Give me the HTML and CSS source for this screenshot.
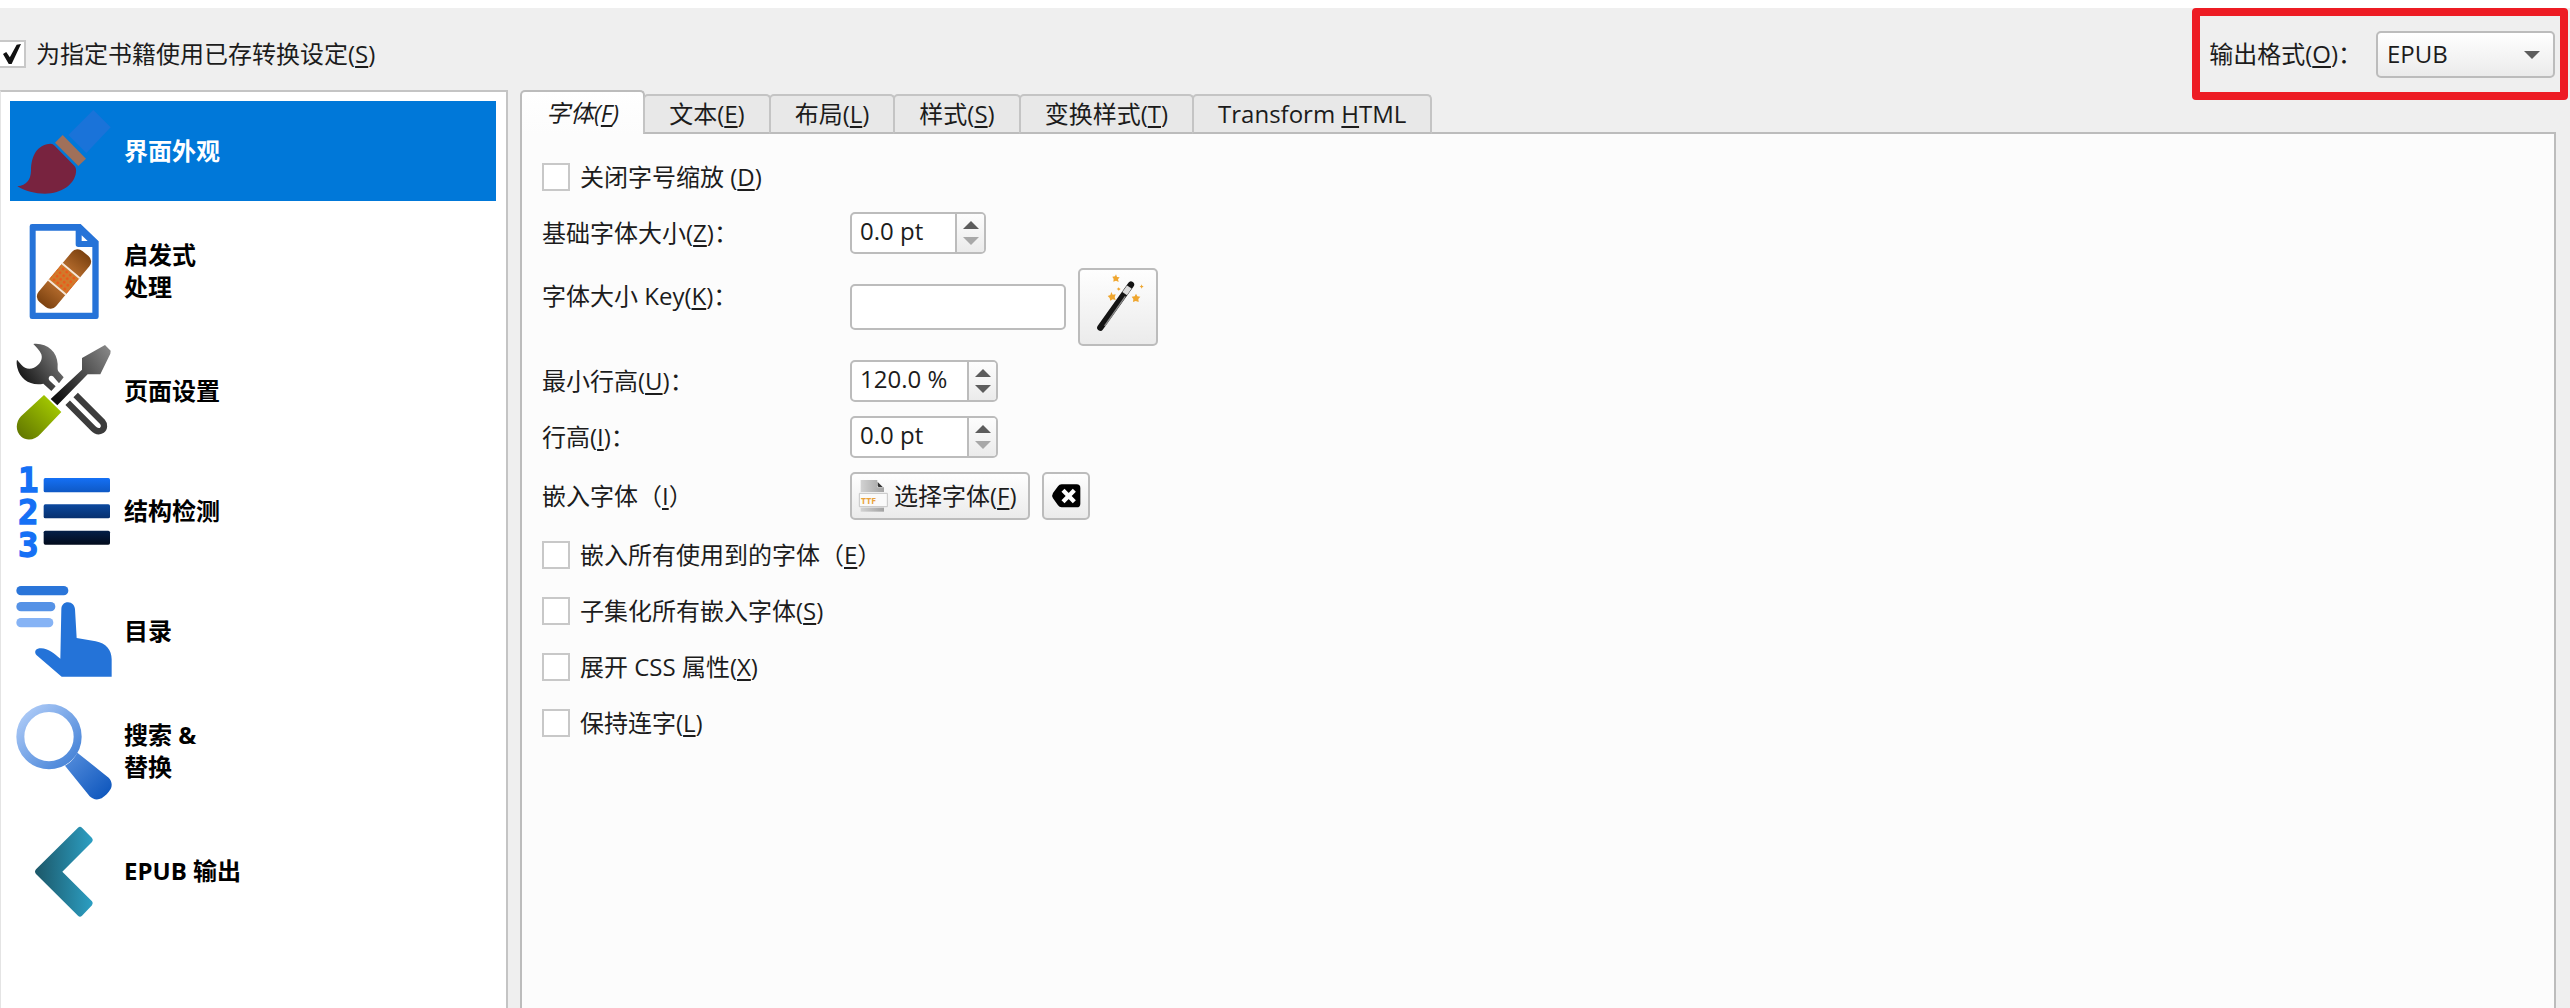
FILE: index.html
```html
<!DOCTYPE html>
<html lang="zh-CN">
<head>
  <meta charset="UTF-8">
  <meta name="viewport" content="width=device-width, initial-scale=1.0">
  <title>转换</title>
  <link rel="stylesheet" href="styles.css">
</head>
<body>
  <header class="topbar">
    <label class="check"><input type="checkbox" checked><span>为指定书籍使用已存转换设定(<u>S</u>)</span></label>
    <div class="output-format">
      <label for="format">输出格式(<u>O</u>)：</label>
      <div class="select-wrap">
        <select id="format">
          <option>EPUB</option>
        </select>
      </div>
    </div>
  </header>

  <main class="content">
    <nav class="sidebar">
      <button type="button" class="item active">
        <svg class="icon" viewBox="48 309 288 288">
          <path fill="#1a73d9" d="M280 330l52 52-73 77-54-54z"/>
          <path fill="#a0705a" d="M188 405l70 71-23 22-70-70z"/>
          <path fill="#78233f" d="M152 431c5 0 8 2 12 6l59 60c5 6 6 11 5 20-4 36-43 64-93 64-30 0-59-7-83-22 28-3 40-20 41-46 0-46 18-79 59-82z"/>
        </svg>
        <span>界面外观</span>
      </button>
      <button type="button" class="item">
        <svg class="icon" viewBox="48 669 288 288">
          <defs>
            <linearGradient id="band" x1="0" y1="0" x2="1" y2="0">
              <stop offset="0" stop-color="#7c4210"/>
              <stop offset=".3" stop-color="#ac6528"/>
              <stop offset=".7" stop-color="#ac6528"/>
              <stop offset="1" stop-color="#7c4210"/>
            </linearGradient>
            <pattern id="dots" width="14" height="14" patternUnits="userSpaceOnUse">
              <rect width="14" height="14" fill="#cf7b2c"/>
              <circle cx="7" cy="7" r="4" fill="#ee5518"/>
            </pattern>
          </defs>
          <path fill="#2673d8" fill-rule="evenodd" d="M96 672h146l54 52v226q0 7-7 7H96q-7 0-7-7V679q0-7 7-7zm11 20v246h170V741h-42q-8 0-8-8v-41zm138 14v17h18z"/>
          <g transform="translate(192 837) rotate(-50)">
            <rect x="-100" y="-34" width="200" height="68" rx="22" fill="url(#band)"/>
            <rect x="-30" y="-34" width="60" height="68" fill="url(#dots)"/>
            <path d="M-32-35v70M32-35v70" stroke="#f6e6d8" stroke-width="6"/>
          </g>
        </svg>
        <span>启发式<br>处理</span>
      </button>
      <button type="button" class="item">
        <svg class="icon" viewBox="48 39 288 288">
          <defs>
            <linearGradient id="steel" x1="0" y1=".7" x2="1" y2="0">
              <stop offset="0" stop-color="#111"/>
              <stop offset="1" stop-color="#8c8c8c"/>
            </linearGradient>
            <linearGradient id="grip" x1="0" y1="1" x2="1" y2="0">
              <stop offset="0" stop-color="#5c7000"/>
              <stop offset="1" stop-color="#b0d800"/>
            </linearGradient>
          </defs>
          <path fill="url(#steel)" d="M100 42c40-4 71 22 73 60 0 9-1 18 2 22l16 18-14 18-18-21q-7-4-12 2-3 6 2 11l18 17-13 14-24-22c-38 8-70-14-78-48-2-9-3-17-1-24l13 15c10 12 24 15 38 9 18-8 27-25 22-40-5-13-14-20-24-31z"/>
          <path fill="none" stroke="#3c3c3c" stroke-width="19" d="M203 218l76 77c8 8 18 11 26 6 9-6 9-18 2-26l-80-80"/>
          <path fill="url(#steel)" d="M315 45l17 17-1 9-30 62h-38l-91 93-20-19 94-88V84z"/>
          <path fill="url(#grip)" d="M132 195l52 51-62 65c-16 19-42 23-58 9-19-16-17-44-1-61z"/>
        </svg>
        <span>页面设置</span>
      </button>
      <button type="button" class="item">
        <svg class="icon" viewBox="48 399 288 288">
          <defs>
            <linearGradient id="bar1" x1="0" y1="0" x2="0" y2="1"><stop stop-color="#1570f5"/><stop offset="1" stop-color="#0e58c4"/></linearGradient>
            <linearGradient id="bar2" x1="0" y1="0" x2="0" y2="1"><stop stop-color="#0b489e"/><stop offset="1" stop-color="#07306e"/></linearGradient>
            <linearGradient id="bar3" x1="0" y1="0" x2="0" y2="1"><stop stop-color="#041f48"/><stop offset="1" stop-color="#020b1c"/></linearGradient>
          </defs>
          <g class="digits">
            <text x="85" y="485">1</text>
            <text x="85" y="583">2</text>
            <text x="85" y="681">3</text>
          </g>
          <rect x="131" y="444" width="199" height="43" rx="5" fill="url(#bar1)"/>
          <rect x="131" y="523" width="199" height="42" rx="5" fill="url(#bar2)"/>
          <rect x="131" y="602" width="199" height="42" rx="5" fill="url(#bar3)"/>
        </svg>
        <span>结构检测</span>
      </button>
      <button type="button" class="item">
        <svg class="icon" viewBox="48 759 288 288">
          <rect x="49" y="768" width="156" height="28" rx="14" fill="#2a75d9"/>
          <rect x="49" y="816" width="117" height="28" rx="14" fill="#5592e6"/>
          <rect x="49" y="864" width="111" height="28" rx="14" fill="#86b3f5"/>
          <path fill="#2473d8" d="M184 838c0-13 8-21 20-21s20 9 21 21l5 86 57 10c31 6 48 26 48 54v52H185l-75-64c-8-8-5-19 8-21 24-3 42 14 63 31z"/>
        </svg>
        <span>目录</span>
      </button>
      <button type="button" class="item">
        <svg class="icon" viewBox="48 129 288 288">
          <defs>
            <linearGradient id="glass" gradientUnits="userSpaceOnUse" x1="70" y1="150" x2="320" y2="410">
              <stop offset="0" stop-color="#aecbf7"/>
              <stop offset=".5" stop-color="#578fdd"/>
              <stop offset="1" stop-color="#0f57bd"/>
            </linearGradient>
          </defs>
          <circle cx="147" cy="230" r="86" fill="none" stroke="url(#glass)" stroke-width="24"/>
          <path fill="url(#glass)" d="M232 278l94 75c9 9 12 23 6 34-7 12-16 20-27 28-13 6-26 4-36-6l-74-92c16-8 28-23 37-39z"/>
        </svg>
        <span>搜索 &amp;<br>替换</span>
      </button>
      <button type="button" class="item">
        <svg class="icon" viewBox="48 489 288 288">
          <defs>
            <linearGradient id="chev" x1="0" y1="0" x2="1" y2="0"><stop stop-color="#1c5768"/><stop offset="1" stop-color="#2c9fc3"/></linearGradient>
          </defs>
          <path fill="url(#chev)" d="M234 503q6-6 12 0l30 31q5 6 0 12l-89 89 89 89q5 6 0 12l-30 31q-6 6-12 0L108 642q-6-7 0-14z"/>
        </svg>
        <span>EPUB 输出</span>
      </button>
    </nav>

    <section class="settings">
      <div class="tabs" role="tablist">
        <button type="button" role="tab" class="tab selected">字体(<u>F</u>)</button>
        <button type="button" role="tab" class="tab">文本(<u>E</u>)</button>
        <button type="button" role="tab" class="tab">布局(<u>L</u>)</button>
        <button type="button" role="tab" class="tab">样式(<u>S</u>)</button>
        <button type="button" role="tab" class="tab">变换样式(<u>T</u>)</button>
        <button type="button" role="tab" class="tab">Transform <u>H</u>TML</button>
      </div>

      <form class="panel">
        <label class="check wide"><input type="checkbox"><span>关闭字号缩放 (<u>D</u>)</span></label>

        <label for="base-size">基础字体大小(<u>Z</u>)：</label>
        <div class="spin spin-small">
          <input type="text" id="base-size" value="0.0 pt">
          <div class="steps">
            <button type="button" class="step up" aria-label="+"></button>
            <button type="button" class="step down off" aria-label="-"></button>
          </div>
        </div>

        <label for="size-key" class="key-label">字体大小 Key(<u>K</u>)：</label>
        <div class="field">
          <input type="text" id="size-key" class="text-input">
          <button type="button" class="btn wand" aria-label="Key">
            <svg viewBox="759 95 210 210" width="70" height="70">
              <path d="M811 262L903 133" stroke="#141414" stroke-width="19" stroke-linecap="round"/>
              <path d="M824 257l62-89" stroke="#8a8a8a" stroke-width="4"/>
              <path d="M884 160l14-20" stroke="#dcdcdc" stroke-width="17"/>
              <g fill="#efa62f">
                <path d="M858 102l3 8 8 1-5 6 2 8-8-4-8 3 1-8-4-7 8-1z"/>
                <path d="M844 155l4 8 9-1-3 9 3 8-9-2-7 4-2-8-6-6 8-3z"/>
                <path d="M918 160l4 8 9 1-6 7 1 9-9-3-8 3 1-9-5-7 9-1z"/>
                <path d="M934 132l2 4 5 2-4 3-2 4-2-4-4-2 4-3z"/>
                <path d="M866 141l2 3 4 2-3 2-3 3-2-3-4-2 4-2z"/>
              </g>
            </svg>
          </button>
        </div>

        <label for="min-height">最小行高(<u>U</u>)：</label>
        <div class="spin">
          <input type="text" id="min-height" value="120.0 %">
          <div class="steps">
            <button type="button" class="step up" aria-label="+"></button>
            <button type="button" class="step down" aria-label="-"></button>
          </div>
        </div>

        <label for="line-height">行高(<u>I</u>)：</label>
        <div class="spin">
          <input type="text" id="line-height" value="0.0 pt">
          <div class="steps">
            <button type="button" class="step up" aria-label="+"></button>
            <button type="button" class="step down off" aria-label="-"></button>
          </div>
        </div>

        <label for="embed-font">嵌入字体（<u>I</u>）</label>
        <div class="field">
          <button type="button" class="btn choose" id="embed-font">
            <svg viewBox="84 726 96 96" width="32" height="32">
              <defs>
                <linearGradient id="page" x1="0" y1="0" x2="1" y2="0"><stop stop-color="#d2d2d2"/><stop offset="1" stop-color="#a2a2a2"/></linearGradient>
              </defs>
              <path fill="url(#page)" d="M92 726h50v22h20v14H92z"/>
              <path fill="#333" d="M143 732l15 15h-11q-4 0-4-4z"/>
              <path fill="#fafafa" stroke="#c4c4c4" stroke-width="3" d="M88 766h84v40H88z"/>
              <path fill="url(#page)" d="M92 809h70v12H92z"/>
              <text class="ttf" x="93" y="797">TTF</text>
            </svg>
            <span>选择字体(<u>F</u>)</span>
          </button>
          <button type="button" class="btn clear" aria-label="清除">
            <svg viewBox="660 720 96 96" width="32" height="32">
              <path d="M695 733h45q11 0 11 11v47q0 11-11 11h-45q-7 0-11-6l-15-21q-5-8 0-16l15-20q4-6 11-6z"/>
              <path d="M699 751l34 34m0-34l-34 34" stroke="#fff" stroke-width="13"/>
            </svg>
          </button>
        </div>

        <label class="check wide"><input type="checkbox"><span>嵌入所有使用到的字体（<u>E</u>）</span></label>
        <label class="check wide"><input type="checkbox"><span>子集化所有嵌入字体(<u>S</u>)</span></label>
        <label class="check wide"><input type="checkbox"><span>展开 CSS 属性(<u>X</u>)</span></label>
        <label class="check wide"><input type="checkbox"><span>保持连字(<u>L</u>)</span></label>
      </form>
    </section>
  </main>
</body>
</html>
```

FILE: styles.css
```css
* {
  box-sizing: border-box;
}

body {
  margin: 0;
  height: 100vh;
  display: flex;
  flex-direction: column;
  overflow: hidden;
  background: #efefef;
  border-top: 8px solid #fff;
  color: #1c1c1c;
  font-family: "Open Sans", "Noto Sans CJK SC", sans-serif;
  font-size: 24px;
  line-height: 32px;
}

button,
input,
select {
  font: inherit;
  color: inherit;
  margin: 0;
}

u {
  text-decoration-thickness: 2px;
  text-underline-offset: 3px;
}

.topbar {
  display: flex;
  justify-content: space-between;
  align-items: center;
  height: 82px;
  padding-top: 10px;
  padding-right: 15px;
  flex-shrink: 0;
}

.topbar .check {
  margin-left: -2px;
}

/* check boxes */
.check {
  display: flex;
  align-items: center;
  gap: 10px;
}

.check input {
  appearance: none;
  width: 28px;
  height: 28px;
  background: #fff;
  border: 2px solid #c8c8c8;
  flex-shrink: 0;
}

.check input:checked::before {
  content: "";
  display: block;
  width: 18px;
  height: 20px;
  margin: 2px 3px;
  background: #111;
  clip-path: polygon(0 50%, 18% 40%, 38% 66%, 76% 4%, 100% 0, 48% 100%, 32% 100%);
}

/* output format */
.output-format {
  display: flex;
  align-items: center;
  gap: 14px;
  position: relative;
}

.output-format::after {
  content: "";
  position: absolute;
  top: -23px;
  right: -13px;
  bottom: -22px;
  left: -17px;
  border: 8px solid #ed1c24;
  border-radius: 4px;
  pointer-events: none;
}

.select-wrap {
  position: relative;
}

.select-wrap::after {
  content: "";
  position: absolute;
  top: 20px;
  right: 15px;
  border: 8px solid transparent;
  border-top-color: #5c5c5c;
  border-bottom: 0;
  pointer-events: none;
}

select {
  appearance: none;
  display: block;
  width: 179px;
  height: 47px;
  padding: 0 9px;
  background: linear-gradient(#fff, #ebebeb);
  border: 2px solid #bcbcbc;
  border-radius: 5px;
}

.content {
  flex: 1;
  min-height: 0;
  display: flex;
  gap: 12px;
  padding-right: 14px;
}

/* sidebar */
.sidebar {
  width: 508px;
  flex-shrink: 0;
  display: flex;
  flex-direction: column;
  gap: 20px;
  padding: 9px 10px 0 9px;
  background: #fff;
  border: 2px solid #c4c4c4;
  border-left: 1px solid #e4e4e4;
  border-bottom: 0;
}

.item {
  display: flex;
  align-items: center;
  gap: 12px;
  height: 100px;
  padding: 0 6px;
  flex-shrink: 0;
  border: 0;
  background: none;
  color: #000;
  font-weight: bold;
  text-align: left;
}

.item.active {
  background: #0078d9;
  color: #fff;
}

.icon {
  width: 96px;
  height: 96px;
  flex-shrink: 0;
  overflow: visible;
}

.digits {
  font-family: "DejaVu Sans Mono", monospace;
  font-size: 102px;
  font-weight: bold;
  fill: #1570f5;
  stroke: #1570f5;
  stroke-width: 4px;
  text-anchor: middle;
}

/* tabs */
.settings {
  flex: 1;
  display: flex;
  flex-direction: column;
}

.tabs {
  display: flex;
  align-items: flex-end;
  height: 44px;
  margin-bottom: -2px;
  z-index: 1;
}

.tab {
  height: 40px;
  padding: 0 24px;
  margin-left: -2px;
  background: #e8e8e8;
  border: 2px solid #c4c4c4;
  border-bottom-color: #bcbcbc;
  border-radius: 5px 5px 0 0;
}

.tab.selected {
  height: 44px;
  margin-left: 0;
  background: linear-gradient(#fff, #fcfcfc);
  border-color: #bcbcbc;
  border-bottom: 0;
  font-style: italic;
}

.panel {
  flex: 1;
  display: grid;
  grid-template-columns: 308px 1fr;
  align-content: start;
  align-items: center;
  gap: 14px 0;
  padding: 22px 20px 0;
  background: #fcfcfc;
  border: 2px solid #bcbcbc;
  border-bottom: 0;
}

.wide {
  grid-column: 1 / -1;
  justify-self: start;
  height: 42px;
}

.key-label {
  align-self: start;
  padding-top: 12px;
}

.field {
  display: flex;
  align-items: center;
  gap: 12px;
}

.text-input {
  width: 216px;
  height: 46px;
  padding: 0 8px;
  background: #fff;
  border: 2px solid #bcbcbc;
  border-radius: 5px;
}

.spin {
  display: flex;
  width: 148px;
  height: 42px;
  background: #fff;
  border: 2px solid #bcbcbc;
  border-radius: 5px;
  overflow: hidden;
}

.spin-small {
  width: 136px;
}

.spin input {
  flex: 1;
  min-width: 0;
  padding: 0 0 4px 8px;
  border: 0;
  background: none;
}

.steps {
  display: flex;
  flex-direction: column;
  width: 29px;
  padding: 3px 0;
  border-left: 2px solid #bcbcbc;
  background: linear-gradient(#fdfdfd, #ebebeb);
}

.step {
  flex: 1;
  display: flex;
  align-items: center;
  justify-content: center;
  padding: 0;
  border: 0;
  background: none;
}

.step::before {
  content: "";
  border: 8px solid transparent;
}

.step.up::before {
  border-top: 0;
  border-bottom-color: #5c5c5c;
}

.step.down::before {
  border-bottom: 0;
  border-top-color: #5c5c5c;
}

.step.off::before {
  border-top-color: #a8a8a8;
}

.btn {
  display: flex;
  align-items: center;
  justify-content: center;
  height: 48px;
  padding: 0;
  background: linear-gradient(#fefefe, #ebebeb);
  border: 2px solid #bcbcbc;
  border-radius: 5px;
}

.wand {
  width: 80px;
  height: 78px;
}

.choose {
  gap: 4px;
  padding: 0 11px 0 6px;
}

.clear {
  width: 48px;
}

.ttf {
  font-family: "Noto Sans", sans-serif;
  font-size: 26px;
  font-weight: bold;
  fill: #e9a23b;
}
```
